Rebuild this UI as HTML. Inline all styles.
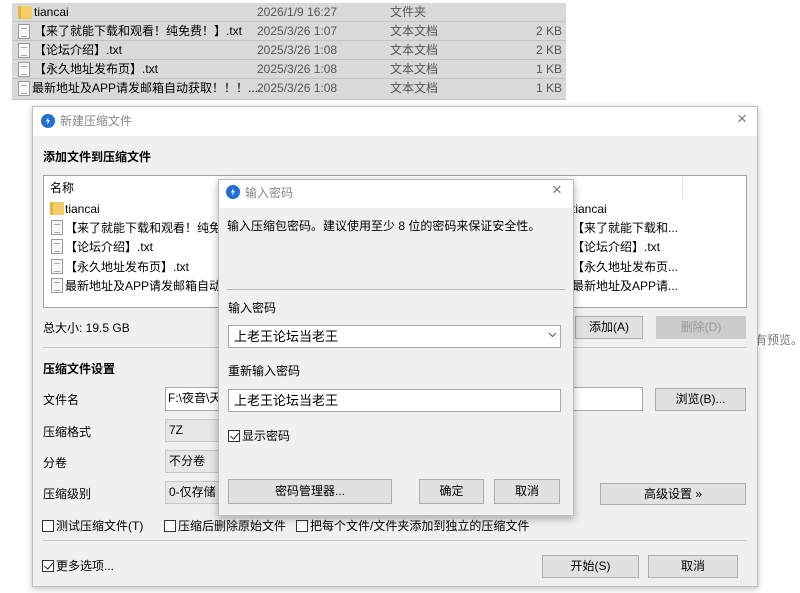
<!DOCTYPE html>
<html><head><meta charset="utf-8"><style>
*{box-sizing:border-box;margin:0;padding:0}
body{width:800px;height:593px;background:#fff;position:relative;overflow:hidden;font-family:"Liberation Sans","Noto Sans CJK SC",sans-serif;font-size:12px;line-height:16px;color:#000}
.a{position:absolute;white-space:nowrap;line-height:16px}
.row{position:absolute;left:12px;width:554px;height:19px;background:#d9d9d9;border-bottom:1px solid #c4c4c4}
.row span{position:absolute;top:0;line-height:18px}
.d{left:245px;color:#555}.t{left:378px;color:#555}.s{right:4px;color:#555}
.doc{position:absolute;width:12px;height:15px;border:1px solid #999;background:#f7f7f7}
.doc:after{content:"";position:absolute;left:2px;top:3px;width:6px;height:7px;border-top:1px solid #aaa;border-bottom:1px solid #aaa}
.fold{position:absolute;width:14px;height:13px;background:#f3cd68;border-left:3px solid #e2b44a}
.btn{position:absolute;background:#e1e1e1;border:1px solid #adadad;text-align:center;line-height:21px;white-space:nowrap}
.inp{position:absolute;background:#fff;border:1px solid #a8a8a8;padding-left:5px;line-height:21px;white-space:nowrap;overflow:hidden}
.sel{position:absolute;background:#e6e6e6;border:1px solid #c8c8c8;padding-left:3px;line-height:21px}
.cb{display:inline-block;width:12px;height:12px;border:1px solid #333;vertical-align:-2px;margin-right:2px;background:#fff;position:relative}
.cb.on:after{content:"";position:absolute;left:3px;top:0px;width:4px;height:7px;border:solid #222;border-width:0 1.3px 1.3px 0;transform:rotate(40deg)}
.logo{position:absolute;width:14px;height:14px;border-radius:50%;background:#1e6fd0}
.logo:after{content:"";position:absolute;left:5px;top:3px;width:4px;height:8px;background:#fff;clip-path:polygon(60% 0,0 55%,45% 55%,30% 100%,100% 40%,55% 40%)}
.hr{position:absolute;height:1px;background:#c8c8c8}
</style></head><body>
<div class="row" style="top:3px"><div class="fold" style="left:6px;top:3px"></div><span style="left:22px">tiancai</span><span class="d">2026/1/9 16:27</span><span class="t">文件夹</span></div>
<div class="row" style="top:22px"><div class="doc" style="left:6px;top:2px"></div><span style="left:22px">【来了就能下载和观看！纯免费！】.txt</span><span class="d">2025/3/26 1:07</span><span class="t">文本文档</span><span class="s">2 KB</span></div>
<div class="row" style="top:41px"><div class="doc" style="left:6px;top:2px"></div><span style="left:22px">【论坛介绍】.txt</span><span class="d">2025/3/26 1:08</span><span class="t">文本文档</span><span class="s">2 KB</span></div>
<div class="row" style="top:60px"><div class="doc" style="left:6px;top:2px"></div><span style="left:22px">【永久地址发布页】.txt</span><span class="d">2025/3/26 1:08</span><span class="t">文本文档</span><span class="s">1 KB</span></div>
<div class="row" style="top:79px;height:21px"><div class="doc" style="left:6px;top:2px"></div><span style="left:20px">最新地址及APP请发邮箱自动获取！！！....</span><span class="d">2025/3/26 1:08</span><span class="t">文本文档</span><span class="s">1 KB</span></div>

<div class="a" style="left:755px;top:332px;color:#777">有预览。</div>

<div class="a" style="left:32px;top:106px;width:726px;height:481px;background:#f0f0f0;border:1px solid #bfbfbf;box-shadow:0 2px 6px rgba(0,0,0,.25)">
<div class="a" style="left:0;top:0;width:724px;height:29px;background:#fff"></div>
</div>
<div class="logo" style="left:41px;top:114px"></div>
<div class="a" style="left:60px;top:113px;color:#888">新建压缩文件</div>
<div class="a" style="left:737px;top:111px;color:#777;font-size:17px">×</div>
<div class="a" style="left:43px;top:149px;font-weight:bold">添加文件到压缩文件</div>
<div class="a" style="left:43px;top:175px;width:704px;height:133px;background:#fff;border:1px solid #a0a0a0"></div>
<div class="a" style="left:682px;top:177px;width:1px;height:22px;background:#e5e5e5"></div>
<div class="a" style="left:50px;top:180px">名称</div>
<div class="fold" style="left:50px;top:202px"></div><div class="a" style="left:65px;top:201px">tiancai</div>
<div class="doc" style="left:51px;top:220px"></div><div class="a" style="left:65px;top:220px">【来了就能下载和观看！纯免费</div>
<div class="doc" style="left:51px;top:239px"></div><div class="a" style="left:65px;top:239px">【论坛介绍】.txt</div>
<div class="doc" style="left:51px;top:259px"></div><div class="a" style="left:65px;top:259px">【永久地址发布页】.txt</div>
<div class="doc" style="left:51px;top:278px"></div><div class="a" style="left:65px;top:278px">最新地址及APP请发邮箱自动获</div>
<div class="a" style="left:572px;top:201px">tiancai</div>
<div class="a" style="left:572px;top:220px">【来了就能下载和...</div>
<div class="a" style="left:572px;top:239px">【论坛介绍】.txt</div>
<div class="a" style="left:572px;top:259px">【永久地址发布页...</div>
<div class="a" style="left:572px;top:278px">最新地址及APP请...</div>
<div class="a" style="left:43px;top:320px">总大小: 19.5 GB</div>
<div class="btn" style="left:575px;top:316px;width:68px;height:23px">添加(A)</div>
<div class="btn" style="left:656px;top:316px;width:90px;height:23px;color:#999;background:#ccc;border-color:#ccc">删除(D)</div>
<div class="hr" style="left:43px;top:347px;width:704px"></div>
<div class="a" style="left:43px;top:361px;font-weight:bold">压缩文件设置</div>
<div class="a" style="left:43px;top:392px">文件名</div>
<div class="inp" style="left:165px;top:387px;width:478px;height:24px;padding-left:2px">F:\夜音\天</div>
<div class="btn" style="left:655px;top:388px;width:91px;height:23px">浏览(B)...</div>
<div class="a" style="left:43px;top:424px">压缩格式</div>
<div class="sel" style="left:165px;top:419px;width:100px;height:23px">7Z</div>
<div class="a" style="left:43px;top:455px">分卷</div>
<div class="sel" style="left:165px;top:450px;width:100px;height:23px">不分卷</div>
<div class="a" style="left:43px;top:486px">压缩级别</div>
<div class="sel" style="left:165px;top:481px;width:100px;height:23px">0-仅存储</div>
<div class="btn" style="left:600px;top:483px;width:146px;height:22px">高级设置 »</div>
<div class="a" style="left:42px;top:518px"><span class="cb"></span>测试压缩文件(T)</div>
<div class="a" style="left:164px;top:518px"><span class="cb"></span>压缩后删除原始文件</div>
<div class="a" style="left:296px;top:518px"><span class="cb"></span>把每个文件/文件夹添加到独立的压缩文件</div>
<div class="hr" style="left:43px;top:540px;width:704px"></div>
<div class="a" style="left:42px;top:558px"><span class="cb on"></span>更多选项...</div>
<div class="btn" style="left:542px;top:555px;width:97px;height:23px">开始(S)</div>
<div class="btn" style="left:648px;top:555px;width:90px;height:23px">取消</div>

<div class="a" style="left:218px;top:179px;width:356px;height:337px;background:#f0f0f0;border:1px solid #bbb;box-shadow:0 3px 8px rgba(0,0,0,.3)">
<div class="a" style="left:0;top:0;width:354px;height:28px;background:#fff"></div>
</div>
<div class="logo" style="left:226px;top:185px"></div>
<div class="a" style="left:245px;top:185px;color:#888">输入密码</div>
<div class="a" style="left:552px;top:182px;color:#777;font-size:17px">×</div>
<div class="a" style="left:227px;top:218px">输入压缩包密码。建议使用至少 8 位的密码来保证安全性。</div>
<div class="hr" style="left:227px;top:289px;width:338px;background:#bbb"></div>
<div class="a" style="left:228px;top:300px">输入密码</div>
<div class="inp" style="left:228px;top:325px;width:333px;height:23px;font-size:13px">上老王论坛当老王</div>
<svg class="a" style="left:548px;top:332px" width="9" height="6"><path d="M1 1 L4.5 4.5 L8 1" fill="none" stroke="#555" stroke-width="1"/></svg>
<div class="a" style="left:228px;top:363px">重新输入密码</div>
<div class="inp" style="left:228px;top:389px;width:333px;height:23px;font-size:13px">上老王论坛当老王</div>
<div class="a" style="left:228px;top:428px"><span class="cb on"></span>显示密码</div>
<div class="btn" style="left:228px;top:479px;width:164px;height:25px;line-height:23px">密码管理器...</div>
<div class="btn" style="left:419px;top:479px;width:65px;height:25px;line-height:23px">确定</div>
<div class="btn" style="left:494px;top:479px;width:66px;height:25px;line-height:23px">取消</div>
</body></html>
